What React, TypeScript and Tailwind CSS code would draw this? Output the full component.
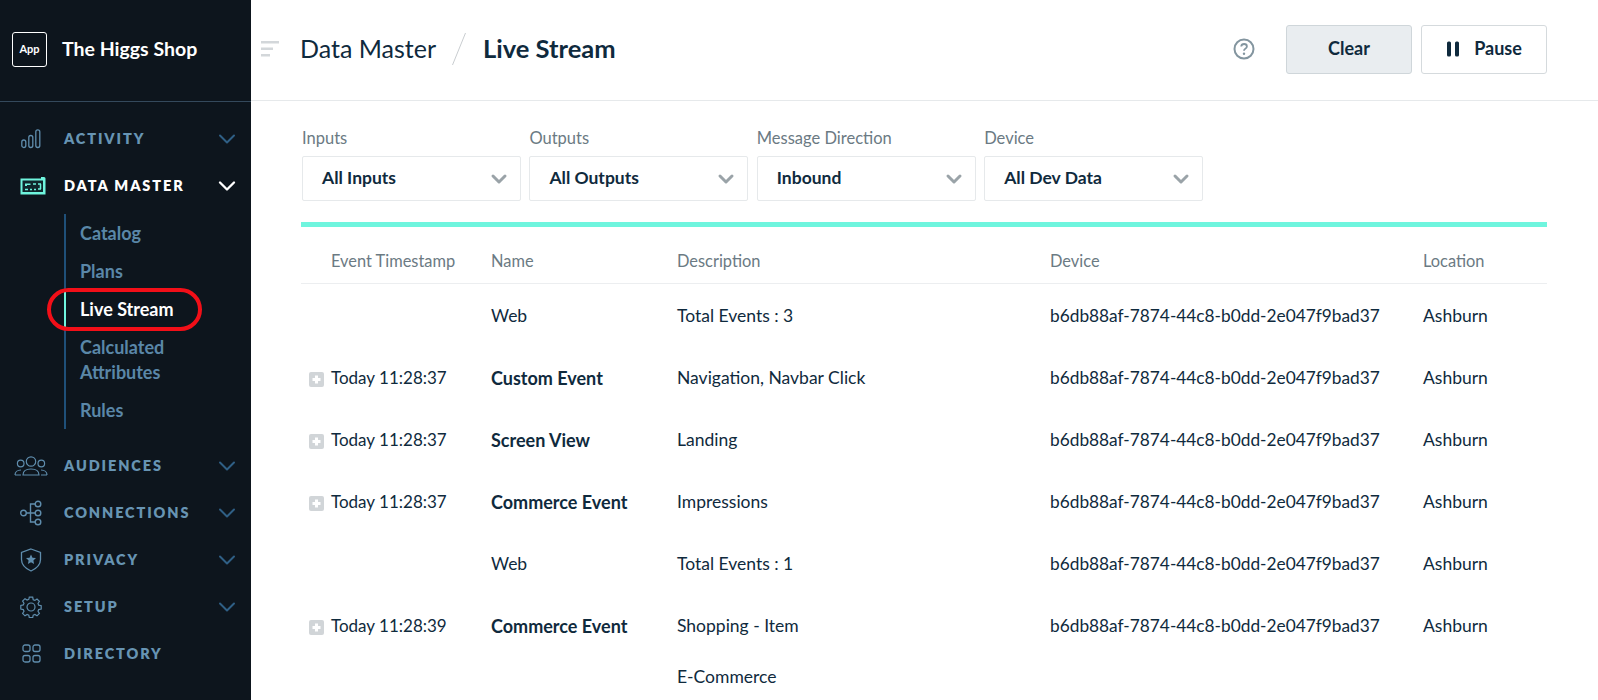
import React from "react";
import { ChevronDown } from "lucide-react";

const FONT = "font-['Lato','Liberation_Sans',sans-serif]";

const DEVICE = "b6db88af-7874-44c8-b0dd-2e047f9bad37";

const ROWS = [
    { time: "", name: "Web", bold: false, description: "Total Events : 3", device: DEVICE, location: "Ashburn" },
    { time: "Today 11:28:37", name: "Custom Event", bold: true, description: "Navigation, Navbar Click", device: DEVICE, location: "Ashburn" },
    { time: "Today 11:28:37", name: "Screen View", bold: true, description: "Landing", device: DEVICE, location: "Ashburn" },
    { time: "Today 11:28:37", name: "Commerce Event", bold: true, description: "Impressions", device: DEVICE, location: "Ashburn" },
    { time: "", name: "Web", bold: false, description: "Total Events : 1", device: DEVICE, location: "Ashburn" },
    { time: "Today 11:28:39", name: "Commerce Event", bold: true, description: "Shopping - Item", device: DEVICE, location: "Ashburn" },
];

const FILTERS = [
    { label: "Inputs", value: "All Inputs" },
    { label: "Outputs", value: "All Outputs" },
    { label: "Message Direction", value: "Inbound" },
    { label: "Device", value: "All Dev Data" },
];

function ActivityIcon() {
    return (
        <svg width="20" height="20" viewBox="0 0 20 20" fill="none" stroke="currentColor" strokeWidth="1.300">
            <rect x="0.800" y="11" width="4" height="7.500" rx="2" />
            <rect x="7.800" y="6.500" width="4" height="12" rx="2" />
            <rect x="14.800" y="0.800" width="4" height="17.700" rx="2" />
        </svg>
    );
}

function DataMasterIcon() {
    return (
        <svg width="26" height="18" viewBox="0 0 26 18" fill="none" className="ml-[4px]">
            <path d="M0.500 1.500H21V0H24a1.500 1.500 0 0 1 1.500 1.500V17.500H0.500z" fill="#6ff5de" />
            <rect x="2.500" y="3.500" width="20.500" height="11.500" fill="#10272c" />
            <path d="M5 9V6.500h5.500V8H7v1z" fill="#6ff5de" />
            <path d="M13 7h3M18 7h3M20.500 7v5M18 12h3M14 12.500h2M10 12.500h2M5 12.500h3" stroke="#6ff5de" strokeWidth="1.500" />
        </svg>
    );
}

function AudiencesIcon() {
    return (
        <svg width="34" height="20" viewBox="0 0 34 20" fill="none" stroke="currentColor" strokeWidth="1.200">
            <circle cx="17" cy="5.500" r="4.700" />
            <circle cx="6.700" cy="7.500" r="3.300" />
            <circle cx="27.300" cy="7.500" r="3.300" />
            <path d="M9 19c0-4 3.500-6 8-6s8 2 8 6z" />
            <path d="M1 19c0-3 2.500-5 6-5M33 19c0-3-2.500-5-6-5M1 19h6M33 19h-6" />
        </svg>
    );
}

function ConnectionsIcon() {
    return (
        <svg width="22" height="26" viewBox="0 0 22 26" fill="none" stroke="currentColor" strokeWidth="1.400">
            <circle cx="3.500" cy="13" r="2.800" />
            <circle cx="18" cy="4" r="2.800" />
            <circle cx="18" cy="13" r="2.800" />
            <circle cx="18" cy="22" r="2.800" />
            <path d="M6.300 13H15.200M15.200 4H10.500V22H15.200" />
        </svg>
    );
}

function PrivacyIcon() {
    return (
        <svg width="22" height="24" viewBox="0 0 22 24" fill="none" stroke="currentColor" strokeWidth="1.300">
            <path d="M11 1l9.500 3.500v7c0 5-4 9-9.500 11.500C5.500 20.500 1.500 16.500 1.500 11.500v-7z" />
            <path d="M11 6.500l1.500 3.200 3.500.4-2.600 2.300.7 3.500-3.100-1.700-3.100 1.700.7-3.500L6 10.100l3.500-.4z" fill="currentColor" stroke="none" />
        </svg>
    );
}

function SetupIcon() {
    return (
        <svg width="22" height="22" viewBox="0 0 22 22" fill="none" stroke="currentColor" strokeWidth="1.200">
            <circle cx="11" cy="11" r="4" />
            <path d="M9.300 1.200h3.400l.5 2.500 1.700.7 2.100-1.400 2.400 2.400-1.400 2.100.7 1.700 2.500.5v3.400l-2.500.5-.7 1.700 1.400 2.100-2.400 2.400-2.100-1.400-1.700.7-.5 2.500H9.300l-.5-2.500-1.700-.7-2.100 1.400-2.400-2.400 1.400-2.100-.7-1.700-2.500-.5V9.400l2.500-.5.7-1.700-1.400-2.100 2.400-2.400 2.100 1.400 1.700-.7z" />
        </svg>
    );
}

function DirectoryIcon() {
    return (
        <svg width="19" height="19" viewBox="0 0 19 19" fill="none" stroke="currentColor" strokeWidth="1.300">
            <rect x="1" y="1" width="7" height="6.500" rx="2" />
            <rect x="11" y="1" width="7" height="6.500" rx="2" />
            <rect x="1" y="11.500" width="7" height="6.500" rx="2" />
            <rect x="11" y="11.500" width="7" height="6.500" rx="2" />
        </svg>
    );
}

function NavItem({ icon, label, active, chevron = true }: { icon: React.ReactNode; label: string; active?: boolean; chevron?: boolean }) {
    return (
        <div className="flex h-[47px] items-center">
            <div className={"mr-[2px] flex w-[62px] shrink-0 justify-center " + (active ? "text-[#6ff5de]" : "text-[#5f8dad]")}>{icon}</div>
            <span className={"flex-1 text-[14.500px] font-extrabold uppercase tracking-[0.13em] " + (active ? "text-white" : "text-[#6794b3]")}>{label}</span>
            {chevron && <ChevronDown size={28} strokeWidth={active ? 2 : 1.700} className={"mr-[10px] " + (active ? "text-white" : "text-[#2f5f85]")} />}
        </div>
    );
}

function SubItem({ label, active }: { label: string; active?: boolean }) {
    return (
        <div className={"-ml-[2px] border-l-2 py-[6.500px] pl-[14px] pr-[40px] text-[18px] leading-[25px] font-bold " + (active ? "border-[#6ff5de] text-white" : "border-transparent text-[#5a87a8]")}>
            {label}
        </div>
    );
}

function Sidebar() {
    return (
        <aside className="relative flex w-[251px] shrink-0 flex-col bg-[#0d151d]">
            <div className="flex h-[102px] items-center gap-[15px] border-b border-[#34495c] pb-[3px] pl-[12px]">
                <div className="flex h-[35px] w-[35px] items-center justify-center rounded-[3px] border border-white text-[11px] font-bold text-white">App</div>
                <span className="text-[19.500px] font-bold text-white">The Higgs Shop</span>
            </div>
            <nav className="pt-[13px]">
                <NavItem icon={<ActivityIcon />} label="Activity" />
                <NavItem icon={<DataMasterIcon />} label="Data Master" active />
                <div className="ml-[64px] mt-[5px] border-l-2 border-[#1f5079]">
                    <SubItem label="Catalog" />
                    <SubItem label="Plans" />
                    <SubItem label="Live Stream" active />
                    <SubItem label="Calculated Attributes" />
                    <SubItem label="Rules" />
                </div>
                <div className="h-[13px]" />
                <NavItem icon={<AudiencesIcon />} label="Audiences" />
                <NavItem icon={<ConnectionsIcon />} label="Connections" />
                <NavItem icon={<PrivacyIcon />} label="Privacy" />
                <NavItem icon={<SetupIcon />} label="Setup" />
                <NavItem icon={<DirectoryIcon />} label="Directory" chevron={false} />
            </nav>
            {/* annotation round the active item */}
            <div className="absolute left-[47px] top-[288px] h-[43px] w-[155px] rounded-full border-4 border-[#f20f18]" />
        </aside>
    );
}

function Header() {
    return (
        <header className="flex h-[101px] items-center border-b border-[#e6e9eb] pb-[2px] pr-[51px]">
            <svg width="18" height="16" viewBox="0 0 18 16" className="ml-[10px] mr-[21px] text-[#d3d7da]" fill="currentColor">
                <rect x="0" y="0" width="18" height="2.500" />
                <rect x="0" y="6.500" width="12" height="2.500" />
                <rect x="0" y="13" width="9" height="2.500" />
            </svg>
            <span className="text-[25px] text-[#0f2a3d]">Data Master</span>
            <svg width="14" height="34" viewBox="0 0 14 34" className="ml-[16px] mr-[17px] text-[#c9cdd0]" fill="none" stroke="currentColor">
                <path d="M13.500 1L.5 33" />
            </svg>
            <span className="pb-[1px] text-[25.500px] font-bold text-[#0f2a3d]">Live Stream</span>
            <div className="flex-1" />
            <svg width="22" height="22" viewBox="0 0 22 22" fill="none" className="mr-[31px] text-[#83959f]">
                <circle cx="11" cy="11" r="9.500" stroke="currentColor" strokeWidth="2" />
                <path d="M8.200 8.500c.2-1.600 1.300-2.500 2.900-2.500 1.600 0 2.800 1 2.800 2.400 0 2.200-2.900 2.200-2.900 4.300" stroke="currentColor" strokeWidth="1.800" fill="none" />
                <circle cx="11" cy="15.800" r="1.200" fill="currentColor" />
            </svg>
            <button className="h-[49px] w-[126px] rounded-[3px] border border-[#cfd6da] bg-[#e9edf0] pb-[2px] text-[18px] font-bold text-[#0f2a3d]">Clear</button>
            <button className="ml-[9px] flex h-[49px] w-[126px] items-center justify-center gap-[14px] rounded-[3px] border border-[#d5dadd] bg-white pb-[2px] text-[18px] font-bold text-[#0f2a3d]">
                <svg width="14" height="16" viewBox="0 0 14 16" fill="currentColor" className="mt-[2px]">
                    <rect x="1" y="0.500" width="4" height="15" rx="1.500" />
                    <rect x="9" y="0.500" width="4" height="15" rx="1.500" />
                </svg>
                Pause
            </button>
        </header>
    );
}

function Filters() {
    return (
        <div className="flex gap-[8.400px] pl-[1px] pt-[27px]">
            {FILTERS.map((f) => (
                <div key={f.label} className="w-[219px]">
                    <div className="mb-[8px] text-[16.500px] leading-[20px] text-[#6b7a83]">{f.label}</div>
                    <div className="flex h-[45px] items-center justify-between rounded-[2px] border border-[#e6e9eb] pl-[19px] pr-[9px]">
                        <span className="text-[17.500px] font-bold text-[#0f2a3d]">{f.value}</span>
                        <ChevronDown size={24} strokeWidth={3} className="text-[#9aa3a8]" />
                    </div>
                </div>
            ))}
        </div>
    );
}

function PlusBox() {
    return (
        <span className="flex h-[15px] w-[15px] items-center justify-center rounded-[2px] bg-[#d1d5d8] text-white">
            <svg width="9" height="9" viewBox="0 0 9 9" fill="currentColor">
                <rect x="3" y="0.500" width="3" height="8" />
                <rect x="0.500" y="3" width="8" height="3" />
            </svg>
        </span>
    );
}

function EventTable() {
    const cols = "grid grid-cols-[30px_160px_186px_373px_373px_1fr]";
    return (
        <div className="mt-[21px]">
            <div className="h-[5px] bg-[#6ff5de]" />
            <div className={cols + " h-[57px] items-end border-b border-[#eceef0] pb-[9px] text-[16.400px] text-[#6b7a83]"}>
                <span />
                <span>Event Timestamp</span>
                <span>Name</span>
                <span>Description</span>
                <span>Device</span>
                <span>Location</span>
            </div>
            <div className="pt-[1px] text-[17.500px] text-[#0f2a3d]">
                {ROWS.map((r, i) => (
                    <div key={i} className={cols + " h-[62px] items-center"}>
                        <span className="flex justify-start pl-[8px] pt-[3px]">{r.time && <PlusBox />}</span>
                        <span className="text-[17px]">{r.time}</span>
                        <span className={r.bold ? "text-[18px] font-bold" : ""}>{r.name}</span>
                        <span>{r.description}</span>
                        <span className="text-[17.300px]">{r.device}</span>
                        <span>{r.location}</span>
                    </div>
                ))}
                <div className={cols + " h-[40px] items-center"}>
                    <span />
                    <span />
                    <span />
                    <span>E-Commerce</span>
                </div>
            </div>
        </div>
    );
}

export default function App() {
    return (
        <div className={"flex h-[700px] w-full overflow-hidden bg-white " + FONT}>
            <Sidebar />
            <main className="min-w-0 flex-1">
                <Header />
                <div className="pl-[50px] pr-[51px]">
                    <Filters />
                    <EventTable />
                </div>
            </main>
        </div>
    );
}
